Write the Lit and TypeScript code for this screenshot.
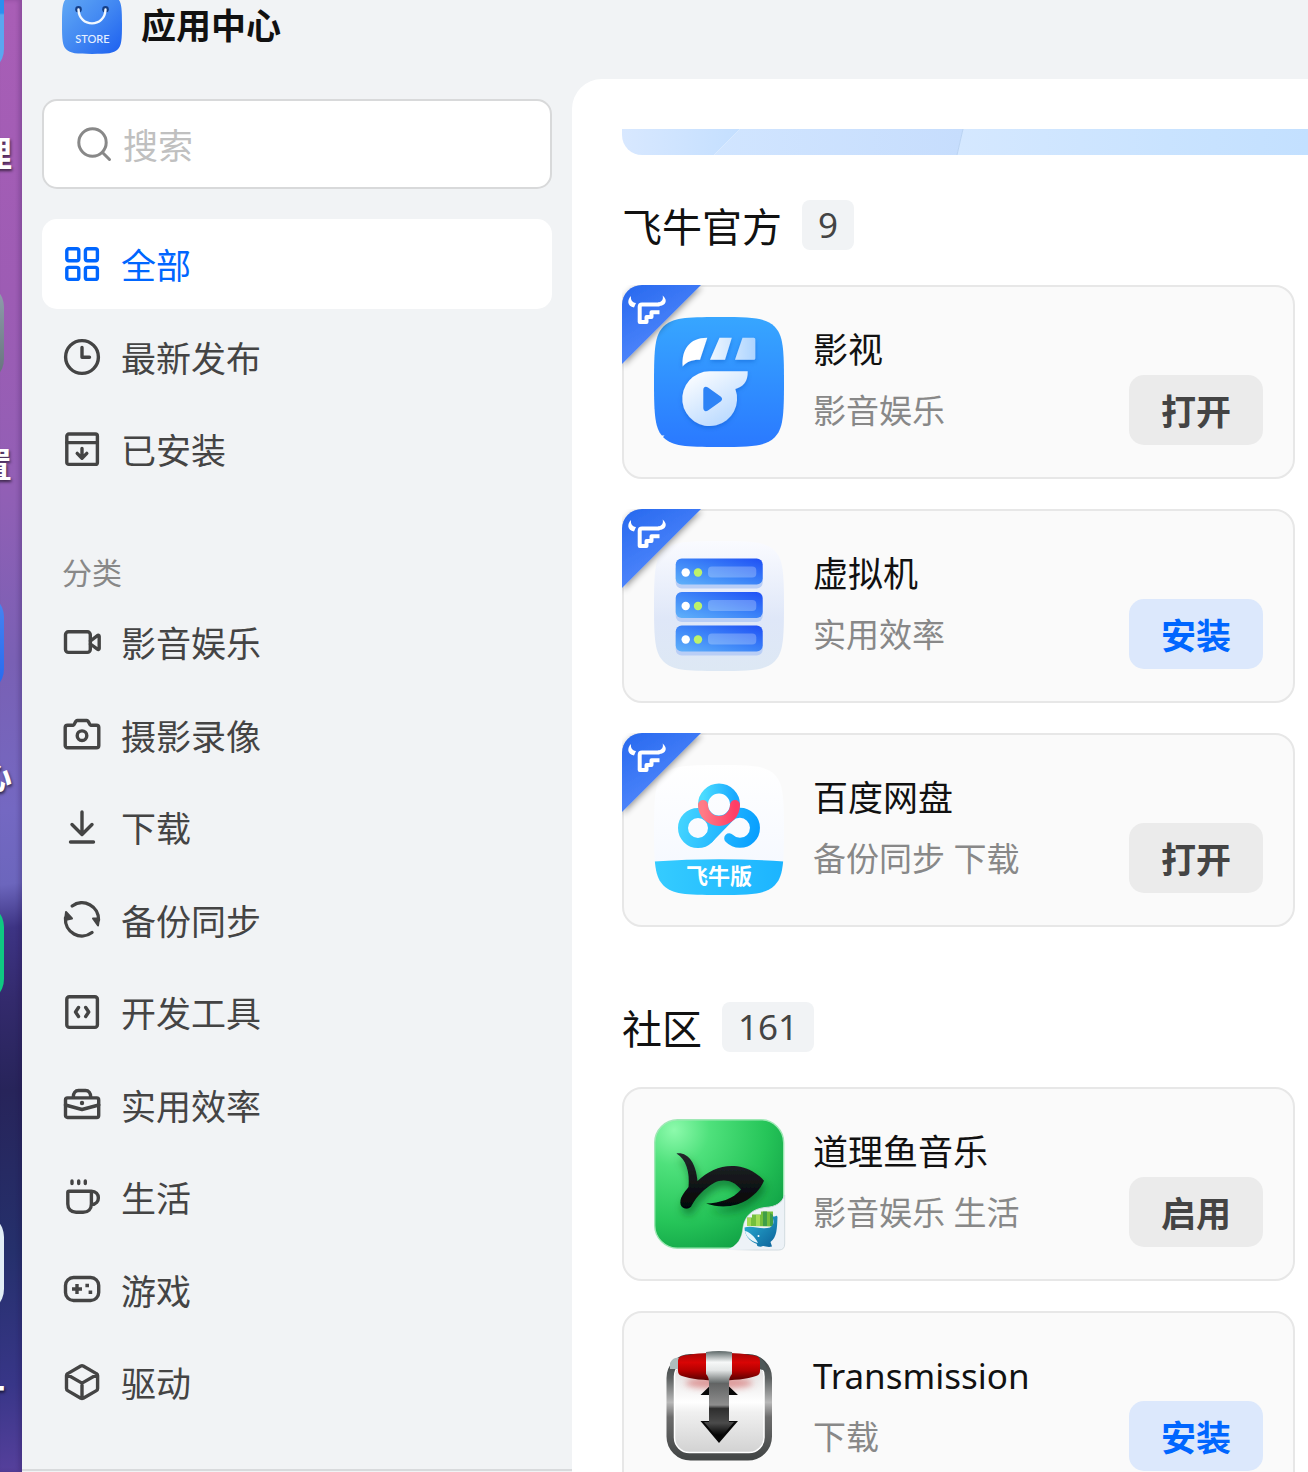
import { LitElement, html, svg, css } from "lit";
import type { SVGTemplateResult, TemplateResult } from "lit";
import { customElement, property, state } from "lit/decorators.js";
import { classMap } from "lit/directives/class-map.js";

const TILE =
  "M0 65C0 31 1 18 9.5 9.5S31 0 65 0 112 1 120.5 9.5 130 31 130 65 129 112 120.5 120.5 99 130 65 130 18 129 9.5 120.5 0 99 0 65Z";

const glyphs: Record<string, SVGTemplateResult> = {
  all: svg`<rect x="4.8" y="4.8" width="12" height="12" rx="2"/><rect x="23.4" y="4.8" width="12" height="12" rx="2"/><rect x="4.8" y="23.4" width="12" height="12" rx="2"/><rect x="23.4" y="23.4" width="12" height="12" rx="2"/>`,
  clock: svg`<circle cx="20" cy="20" r="16.4"/><path d="M20 10.5v9.7h7.5"/>`,
  installed: svg`<rect x="4.8" y="5" width="30.6" height="30.4" rx="2"/><path d="M4.8 13.6h30.6M20 19.5v9M15.2 24.4l4.8 4.8 4.8-4.8"/>`,
  video: svg`<rect x="3.5" y="9.8" width="24.8" height="20.6" rx="3"/><path d="M28.4 19l7-5.4c.8-.6 1.8-.2 1.8.8v12c0 1-1 1.4-1.8.8l-7-5.2"/>`,
  camera: svg`<path d="M5.6 10.2h5.8c1.4 0 1.4-4.7 4-4.7h9.2c2.6 0 2.6 4.7 4 4.7h5.8c1.4 0 2.4 1 2.4 2.4v17.8c0 1.4-1 2.4-2.4 2.4H5.6c-1.4 0-2.4-1-2.4-2.4V12.6c0-1.4 1-2.4 2.4-2.4z"/><circle cx="20" cy="20.7" r="4.8"/>`,
  download: svg`<path d="M20 5v22M10 17.5L20 27.5 30 17.5M8.5 35h23"/>`,
  sync: svg`<path d="M10.2 6A16.5 16.5 0 0 1 36.5 20M3.5 18A16.5 16.5 0 0 0 30 32.5"/><path class="solid" d="M4 12l6 6.5L3 20zM37 18.500h-6l5 7z"/>`,
  code: svg`<rect x="4.8" y="4.8" width="30.6" height="30.6" rx="2.5"/><path d="M16.5 15.5l-3 4.5 3 4.5M23.7 15.5l3 4.5-3 4.5"/>`,
  briefcase: svg`<rect x="3.5" y="12.9" width="33.2" height="19.6" rx="2"/><path d="M11.3 12c0-4 2-6.5 5.2-6.5h7c3.2 0 5.2 2.5 5.2 6.5M3.4 20L20 24.5 36.8 20"/><circle class="dot" cx="20" cy="18" r="2.2"/>`,
  cup: svg`<path d="M7 14.2h22.4v12.8c0 5-3.3 8.3-8.3 8.3h-7c-5 0-8.3-3.3-8.3-8.3V15.4c0-.8.5-1.2 1.2-1.2zM29.4 14.2c9 0 9.6 13 0 13.3M10 4v2.5M16.7 4v2.5M23.3 4v2.5"/>`,
  game: svg`<rect x="3.5" y="7.5" width="33.2" height="23" rx="8"/><path class="butt" d="M10 19h10M15 14v10M23.4 15.5h3.6M26.6 22.3h3.6"/>`,
  cube: svg`<path d="M18.8 4c.8-.4 1.6-.4 2.4 0l13.2 7.6c.8.4 1.2 1 1.2 2v13c0 .9-.4 1.6-1.2 2L21.2 36.2c-.8.4-1.6.4-2.4 0L5.7 28.6c-.8-.4-1.2-1.1-1.2-2v-13c0-1 .4-1.6 1.2-2zM5 12.5l15 8.6 15-8.6M20 21v15.5"/>`,
};

const artwork: Record<string, TemplateResult> = {
  movies: html`<svg viewBox="0 0 130 130" aria-hidden="true">
    <defs>
      <linearGradient id="bg" x2="0" y2="1"><stop stop-color="#37a6ff"/><stop offset="1" stop-color="#2a79ff"/></linearGradient>
      <linearGradient id="a" gradientUnits="userSpaceOnUse" x1="30" y1="0" x2="104" y2="0"><stop offset=".2" stop-color="#fff"/><stop offset="1" stop-color="#a9d2ff"/></linearGradient>
      <linearGradient id="b" x1=".1" x2=".8" y2="1"><stop stop-color="#fff"/><stop offset="1" stop-color="#b3d6ff"/></linearGradient>
      <filter id="s" x="-20%" y="-20%" width="140%" height="150%"><feDropShadow dx="0" dy="2" stdDeviation="2" flood-color="#0b4fc0" flood-opacity=".4"/></filter>
    </defs>
    <path d=${TILE} fill="url(#bg)"/>
    <g filter="url(#s)">
      <path fill="url(#a)" d="M28.7 49.5C27.5 33 35 20.7 53.3 20.7L46 42.7C38 42.5 32 45 28.7 49.5zM65.5 20.7h12.3L71 42.7H56zM88.5 20.7h11.3q1.5 0 1.5 1.5v19q0 1.5-1.5 1.5H81z"/>
      <path fill="url(#b)" d="M55.7 54.3h38C94 65 89 70 81.3 72A27.4 27.4 0 1 1 55.7 54.3z"/>
    </g>
    <path fill="#2d83f6" d="M49.3 73c0-3 2.5-4 4.7-2.4l12.6 9c2 1.4 2 3.4 0 4.8l-12.6 9c-2.2 1.6-4.7.6-4.7-2.4z"/>
    <path fill="#fff" d="M7.5 118.5h3l-2 2z"/>
  </svg>`,
  vm: html`<svg viewBox="0 0 130 130" aria-hidden="true">
    <defs>
      <linearGradient id="bg" x2="0" y2="1"><stop stop-color="#fafbff"/><stop offset=".6" stop-color="#dfe7f8"/><stop offset="1" stop-color="#dde8f4"/></linearGradient>
      <linearGradient id="r" x1="0" y1="1" x2="1" y2="0"><stop stop-color="#60b2fa"/><stop offset=".5" stop-color="#3c83f8"/><stop offset="1" stop-color="#1f4ff5"/></linearGradient>
    </defs>
    <path d=${TILE} fill="url(#bg)"/>
    ${[17.5, 51, 84.5].map(
      (y) => svg`<rect x="21.7" y=${y + 4} width="87" height="26" rx="6" fill="#b9cef6"/>
        <rect x="21.7" y=${y} width="87" height="26" rx="6" fill="url(#r)"/>
        <circle cx="31.7" cy=${y + 14} r="4.2" fill="#fff"/>
        <circle cx="44" cy=${y + 14} r="4.2" fill="#bdf26a"/>
        <rect x="54" y=${y + 8} width="48.3" height="11" rx="4" fill="#fff" opacity=".25"/>`
    )}
  </svg>`,
  netdisk: html`<svg viewBox="0 0 130 130" aria-hidden="true">
    <defs>
      <linearGradient id="bg" x2="0" y2="1"><stop stop-color="#fff"/><stop offset="1" stop-color="#f3f7ff"/></linearGradient>
      <linearGradient id="band" x2="1"><stop stop-color="#35ccff"/><stop offset="1" stop-color="#1cb4ff"/></linearGradient>
      <linearGradient id="c" gradientUnits="userSpaceOnUse" x1="24" y1="50" x2="106" y2="70"><stop stop-color="#46d6ff"/><stop offset="1" stop-color="#069dff"/></linearGradient>
      <linearGradient id="t" x2="1"><stop stop-color="#4adcff"/><stop offset="1" stop-color="#1aa9ff"/></linearGradient>
      <linearGradient id="p" x2="1"><stop stop-color="#ff7b86"/><stop offset="1" stop-color="#ff3d66"/></linearGradient>
      <clipPath id="clip"><path d=${TILE}/></clipPath>
    </defs>
    <path d=${TILE} fill="url(#bg)"/>
    <path clip-path="url(#clip)" fill="url(#band)" d="M0 96.5Q65 92 130 96.5V130H0z"/>
    <g fill="none" stroke-width="10" stroke-linecap="round">
      <g stroke="url(#c)"><circle cx="44" cy="63" r="15"/><path d="M54.6 73.6L75 52.6A15 15 0 1 1 75.2 73.3"/></g>
      <circle cx="65" cy="39.5" r="16" stroke="url(#t)"/>
      <path d="M49 40a16 16 0 0 0 32 0" stroke="url(#p)"/>
    </g>
    <text class="band-text" x="65" y="119" text-anchor="middle">飞牛版</text>
  </svg>`,
  music: html`<svg viewBox="0 0 132 132" class="wide" aria-hidden="true">
    <defs>
      <radialGradient id="bg" cx=".15" cy=".08" r="1.1"><stop stop-color="#8dfaac"/><stop offset=".25" stop-color="#4fe17c"/><stop offset=".65" stop-color="#26c559"/><stop offset="1" stop-color="#0c9a41"/></radialGradient>
      <linearGradient id="fish" x2="0" y2="1"><stop stop-color="#23262b"/><stop offset="1" stop-color="#030507"/></linearGradient>
      <linearGradient id="whale" x2="1" y2="1"><stop stop-color="#2cb5d8"/><stop offset="1" stop-color="#0b5f97"/></linearGradient>
      <linearGradient id="corner" x2="1"><stop offset=".1" stop-color="#d2dbe0" stop-opacity="0"/><stop offset=".5" stop-color="#d2dbe0"/></linearGradient>
      <filter id="s" x="-20%" y="-20%" width="150%" height="170%"><feDropShadow dx="2" dy="6" stdDeviation="4" flood-color="#04551f" flood-opacity=".6"/></filter>
    </defs>
    <rect x=".7" y=".7" width="129" height="128.5" rx="23" fill="url(#bg)" stroke="#9fe8b5" stroke-width="1.4"/>
    <path filter="url(#s)" fill="url(#fish)" d="M22.5 34.5C34 33 42 44 43.500 62C56 50 72 44 89 48.500C98 51 105 56 110 61.700C103 79 80 94 52 84.500C66 84 79 80 87 70.500C80 62 70 59 60 64C50 70 43 77 38 86C36 91 29 91 26.700 86C25 79 30 74 34.500 68C36 53 32 40 22.500 34.500z"/>
    <path fill="#edf2f7" stroke="url(#corner)" d="M130.7 76v49q0 6-6 6H72C84 127 88 119 89 108C91 96 99 90 111 88.500C122 88 128 84 130.700 76z"/>
    <path fill="#74bf3d" d="M93 107V98.500h5v-3h9v-3h12v15z"/>
    <path fill="#3f9e48" d="M109 92.500h4V107h-4zM116 94l3 2v11h-3z"/>
    <path fill="#a4db56" d="M93 99h4v8h-4zM102 96h4v11h-4z"/>
    <path fill="url(#whale)" d="M90.500 108.500C98 106 107 111 116 108.500C120 106 120 103 118.500 97.500C122 98 122.500 95 123.500 98C123 110 123 118 116.500 123L118 127.500C113 129 110 126 108 127.500C105 128 102 127 103 125C95 122 90.500 116 90.500 108.500z"/>
    <path fill="#e5f5fb" d="M91 112C96 113 101 118 104 124C97 122 92 118 91 112z"/>
    <circle cx="104.5" cy="117" r="1" fill="#fff"/>
  </svg>`,
  transmission: html`<svg viewBox="0 0 130 130" aria-hidden="true">
    <defs>
      <linearGradient id="rim" x2="0" y2="1"><stop stop-color="#3d4444"/><stop offset=".2" stop-color="#5c6060"/><stop offset=".45" stop-color="#b8b8b8"/><stop offset=".6" stop-color="#6c6c6c"/><stop offset="1" stop-color="#444747"/></linearGradient>
      <linearGradient id="face" x2="0" y2="1"><stop stop-color="#d9d6d6"/><stop offset=".45" stop-color="#fff"/><stop offset=".55" stop-color="#f0f0f0"/><stop offset="1" stop-color="#cfcfcf"/></linearGradient>
      <linearGradient id="red" x2="0" y2="1"><stop stop-color="#a50606"/><stop offset=".35" stop-color="#d90505"/><stop offset=".65" stop-color="#b40000"/><stop offset="1" stop-color="#500"/></linearGradient>
      <linearGradient id="metal" x2="0" y2="1"><stop stop-color="#5d6868"/><stop offset=".35" stop-color="#f6f8f8"/><stop offset=".6" stop-color="#e3e6e6"/><stop offset="1" stop-color="#656a6a"/></linearGradient>
      <linearGradient id="shaft" gradientUnits="userSpaceOnUse" x1="0" y1="38" x2="0" y2="98"><stop stop-color="#5d5f5f"/><stop offset=".4" stop-color="#8e8e8e"/><stop offset=".46" stop-color="#2e2e2e"/><stop offset=".7" stop-color="#4b4b4b"/><stop offset=".9" stop-color="#050505"/></linearGradient>
      <filter id="blur" x="-20%" y="-50%" width="140%" height="200%"><feGaussianBlur stdDeviation="3"/></filter>
    </defs>
    <rect x="16.5" y="15" width="97.5" height="98.5" rx="20" fill="url(#face)" stroke="url(#rim)" stroke-width="8"/>
    <rect x="20.5" y="18.5" width="89.5" height="91" rx="15" fill="none" stroke="#fff" stroke-width="1.5"/>
    <ellipse cx="65" cy="40" rx="34" ry="6" fill="#c44" opacity=".5" filter="url(#blur)"/>
    <path fill="#aebdbd" d="M16 20q3-6 9-5v11h-9z"/>
    <path fill="#4d5858" d="M105 14q7 4 8 14l-8-2z"/>
    <path fill="url(#red)" d="M28 13C45 8.500 85 8.500 102 13q4 1 4 5v10q0 4-4 5C85 39 45 39 28 33q-4-1-4-5V18q0-4 4-5z"/>
    <path fill="#080808" d="M65 34L84 52H75V78H84L65 100 46.500 78H55V52H46.500z"/>
    <path fill="url(#shaft)" d="M55 38h20v41h5L65 96.500 50 79h5z"/>
    <path fill="url(#metal)" d="M52 9q13-2 26 0v22q-3 3-3 9H55q0-6-3-9z"/>
  </svg>`,
};

interface AppInfo {
  name: string;
  tags: string;
  action: string;
  art: string;
  primary?: boolean;
  official?: boolean;
}

interface Section {
  title: string;
  count: number;
  apps: AppInfo[];
}

const sections: Section[] = [
  {
    title: "飞牛官方",
    count: 9,
    apps: [
      { name: "影视", tags: "影音娱乐", action: "打开", art: "movies", official: true },
      { name: "虚拟机", tags: "实用效率", action: "安装", art: "vm", primary: true, official: true },
      { name: "百度网盘", tags: "备份同步 下载", action: "打开", art: "netdisk", official: true },
    ],
  },
  {
    title: "社区",
    count: 161,
    apps: [
      { name: "道理鱼音乐", tags: "影音娱乐 生活", action: "启用", art: "music" },
      { name: "Transmission", tags: "下载", action: "安装", art: "transmission", primary: true },
    ],
  },
];

const mainNav = [
  ["all", "全部"],
  ["clock", "最新发布"],
  ["installed", "已安装"],
];

const categories = [
  ["video", "影音娱乐"],
  ["camera", "摄影录像"],
  ["download", "下载"],
  ["sync", "备份同步"],
  ["code", "开发工具"],
  ["briefcase", "实用效率"],
  ["cup", "生活"],
  ["game", "游戏"],
  ["cube", "驱动"],
];

@customElement("app-art")
class AppArt extends LitElement {
  @property() name = "";

  static styles = css`
    :host {
      display: block;
      width: 130px;
      height: 130px;
      flex: none;
    }
    svg {
      display: block;
      width: 130px;
      height: 130px;
    }
    .wide {
      width: 132px;
      height: 132px;
    }
    .band-text {
      font: 700 22px "Noto Sans CJK SC", sans-serif;
      fill: #fff;
    }
  `;

  render() {
    return artwork[this.name];
  }
}

@customElement("app-card")
class AppCard extends LitElement {
  @property({ attribute: false }) app!: AppInfo;

  static styles = css`
    :host {
      display: block;
    }
    .card {
      position: relative;
      display: flex;
      gap: 29px;
      padding: 30px;
      border: 2px solid #e7e7e7;
      border-radius: 20px;
      background: #fafafa;
    }
    .ribbon {
      position: absolute;
      left: -2px;
      top: -2px;
      width: 90px;
      height: 90px;
    }
    .body {
      flex: 1;
      min-width: 0;
      display: flex;
      flex-direction: column;
      justify-content: space-between;
      padding-bottom: 2px;
    }
    .name {
      margin: 0;
      padding-top: 8px;
      font-size: 35px;
      line-height: 50px;
      font-weight: 400;
      color: #111;
    }
    .row {
      display: flex;
      align-items: center;
      justify-content: space-between;
      gap: 20px;
    }
    .tags {
      padding-top: 2px;
      font-size: 33px;
      line-height: 50px;
      color: #888;
    }
    .action {
      height: 70px;
      padding: 4px 32px 0;
      border: 0;
      border-radius: 15px;
      background: #ebebeb;
      color: #444;
      font: inherit;
      font-size: 35px;
      font-weight: 700;
      line-height: 66px;
      cursor: pointer;
    }
    .primary {
      background: #dce8fc;
      color: #0066ff;
    }
  `;

  render() {
    const { name, tags, action, art, primary, official } = this.app;
    return html`<article class="card">
      <app-art .name=${art}></app-art>
      ${official
        ? html`<svg class="ribbon" viewBox="0 0 90 90" aria-hidden="true">
            <defs>
              <linearGradient id="g" x2=".6" y2="1"><stop stop-color="#2668ee"/><stop offset="1" stop-color="#588dff"/></linearGradient>
              <filter id="s" x="-10%" y="-10%" width="130%" height="130%"><feDropShadow dx="1" dy="2" stdDeviation="3" flood-opacity=".4"/></filter>
            </defs>
            <path filter="url(#s)" fill="url(#g)" d="M20 0H79L0 79V20A20 20 0 0 1 20 0z"/>
            <path fill="#fff" d="M9 11C5 14.500 5 21.500 12 22.500L14 18C10 17.500 8.600 15 9 11zM40.700 10.500C41.500 14.500 40 17 36 17.500L37 21C43.500 20.800 46.500 15.500 40.700 10.500z"/>
            <path fill="none" stroke="#fff" stroke-width="4" stroke-linejoin="round" d="M37.500 19.500H20q-2.300 0-2.300 2.300V37H24.500V32H29.500V27.300H37.500"/>
          </svg>`
        : null}
      <div class="body">
        <h3 class="name">${name}</h3>
        <div class="row">
          <span class="tags">${tags}</span>
          <button class=${classMap({ action: true, primary: !!primary })} type="button">${action}</button>
        </div>
      </div>
    </article>`;
  }
}

@customElement("app-root")
class AppRoot extends LitElement {
  @state() private current = "all";

  static styles = css`
    :host {
      display: block;
      height: 100vh;
      overflow: hidden;
      font-family: "Noto Sans", "Noto Sans CJK SC", sans-serif;
      color: #111;
    }
    .screen {
      display: grid;
      grid-template-columns: 22px minmax(0, 1fr);
      height: 100%;
    }
    .desktop {
      position: relative;
      overflow: hidden;
      background: linear-gradient(
        172deg,
        #a95eb6 0%,
        #9d5cb4 20%,
        #925fb5 33%,
        #7960b4 45%,
        #7468c2 55%,
        #6c66bd 60%,
        #3d3484 63%,
        #332a6c 68%,
        #27245a 74%,
        #25306c 85%,
        #383688 94%,
        #56409c 100%
      );
      box-shadow: inset -3px 0 4px rgba(30, 10, 60, 0.2);
    }
    .shortcut {
      position: absolute;
      right: 18px;
      width: 100px;
      height: 100px;
      border-radius: 24px;
    }
    .caption {
      position: absolute;
      right: 10px;
      font-size: 35px;
      line-height: 40px;
      font-weight: 700;
      color: #fff;
      text-shadow: 1px 2px 3px rgba(0, 0, 0, 0.6);
    }
    .s1 { top: -27px; background: linear-gradient(#2b8ff0 40%, #5aa6f0 42%); }
    .s2 { top: 283px; background: linear-gradient(#92a0b0, #64707a); }
    .s3 { top: 593px; background: linear-gradient(#4a86f0, #2468f0); }
    .s4 { top: 903px; background: #0fc882; }
    .s5 { top: 1213px; background: #e2eef6; }
    .c1 { top: 134px; }
    .c2 { top: 445px; }
    .c3 { top: 756px; }
    .c5 { top: 1369px; right: 17px; }
    .window {
      display: grid;
      grid-template-rows: 109px minmax(0, 1fr);
      grid-template-columns: 550px minmax(0, 1fr);
      margin-top: -30px;
      border-top-left-radius: 31px;
      background: #f1f3f5;
      min-height: 0;
    }
    .header {
      grid-column: 1 / -1;
      display: flex;
      align-items: center;
      gap: 19px;
      padding: 0 40px 1px;
    }
    .store {
      width: 60px;
      height: 60px;
    }
    .store-text {
      font: 500 11px Lato, sans-serif;
      fill: #e6f0ff;
    }
    .title {
      margin: 0;
      padding-top: 4px;
      font-size: 35px;
      line-height: 52px;
      font-weight: 700;
    }
    .sidebar {
      display: flex;
      flex-direction: column;
      min-height: 0;
    }
    .side-body {
      flex: 1;
      min-height: 0;
      overflow: hidden;
      padding: 20px 20px 0;
    }
    .search {
      display: flex;
      align-items: center;
      gap: 9px;
      height: 86px;
      padding: 0 30px;
      margin-bottom: 30px;
      border: 2px solid #d8d9da;
      border-radius: 15px;
      background: #fff;
    }
    .search-icon {
      width: 40px;
      height: 40px;
      flex: none;
      fill: none;
      stroke: #888;
      stroke-width: 3;
      stroke-linecap: round;
    }
    .field {
      flex: 1;
      min-width: 0;
      height: 60px;
      padding: 3px 0 0;
      border: 0;
      outline: 0;
      background: none;
      font: inherit;
      font-size: 35px;
      color: #111;
    }
    .field::placeholder {
      color: #c0c0c0;
      opacity: 1;
    }
    .nav {
      display: flex;
      flex-direction: column;
      gap: 2px;
    }
    .item {
      display: flex;
      align-items: center;
      gap: 19px;
      height: 90px;
      padding: 0 20px;
      border: 0;
      border-radius: 15px;
      background: none;
      color: #444;
      font: inherit;
      font-size: 35px;
      line-height: 52px;
      text-align: left;
      cursor: pointer;
    }
    .item:nth-child(even) {
      margin-top: 1px;
    }
    .label {
      padding-top: 4px;
    }
    .active {
      background: #fff;
      color: #0066ff;
    }
    .glyph {
      width: 40px;
      height: 40px;
      flex: none;
      fill: none;
      stroke: currentColor;
      stroke-width: 3.4;
      stroke-linecap: round;
      stroke-linejoin: round;
    }
    .solid {
      fill: currentColor;
      stroke-width: 2;
    }
    .dot {
      fill: currentColor;
      stroke: none;
    }
    .butt {
      stroke-linecap: butt;
    }
    .group {
      margin: 0;
      padding: 55px 20px 1px;
      font-size: 30px;
      line-height: 47px;
      font-weight: 400;
      color: #888;
    }
    .footer {
      height: 1px;
      border-top: 2px solid #d8dadc;
    }
    .main {
      min-height: 0;
      overflow: hidden;
      padding: 50px 0 0 50px;
      border-top-left-radius: 30px;
      background: #fff;
    }
    .banner {
      display: block;
      width: 100%;
      height: 26px;
      border-bottom-left-radius: 20px;
    }
    .section {
      padding: 45px 13px 30px 0;
    }
    .heading {
      display: flex;
      align-items: center;
      gap: 20px;
      height: 50px;
      margin-bottom: 35px;
    }
    .heading-text {
      margin: 0;
      padding-top: 4px;
      font-size: 40px;
      line-height: 50px;
      font-weight: 400;
    }
    .count {
      padding: 0 16px;
      border-radius: 8px;
      background: #f1f3f5;
      color: #444;
      font-size: 35px;
      line-height: 50px;
    }
    .cards {
      display: grid;
      gap: 30px;
    }
  `;

  private navItem([id, label]: string[]) {
    return html`<button
      type="button"
      class=${classMap({ item: true, active: this.current === id })}
      @click=${() => (this.current = id)}
    >
      <svg class="glyph" viewBox="0 0 40 40" aria-hidden="true">${glyphs[id]}</svg>
      <span class="label">${label}</span>
    </button>`;
  }

  render() {
    return html`<div class="screen">
      <div class="desktop">
        <div class="shortcut s1"></div>
        <div class="caption c1">理</div>
        <div class="shortcut s2"></div>
        <div class="caption c2">置</div>
        <div class="shortcut s3"></div>
        <div class="caption c3">心</div>
        <div class="shortcut s4"></div>
        <div class="shortcut s5"></div>
        <div class="caption c5">一</div>
      </div>
      <div class="window">
        <header class="header">
          <svg class="store" viewBox="0 0 130 130" aria-hidden="true">
            <defs>
              <linearGradient id="store" x2="1" y2="1"><stop stop-color="#64abf5"/><stop offset=".5" stop-color="#4389f2"/><stop offset="1" stop-color="#1c5ff0"/></linearGradient>
            </defs>
            <path fill="url(#store)" d=${TILE}/>
            <svg viewBox="0 0 60 60" width="130" height="130">
              <circle cx="16.5" cy="15.3" r="3.3" fill="#153f86"/>
              <circle cx="43.5" cy="15.3" r="3.3" fill="#153f86"/>
              <path fill="none" stroke="#f2f8ff" stroke-width="2.4" stroke-linecap="round" d="M16.5 15.5C17 34 43 34 43.5 15.5"/>
              <text class="store-text" x="30.5" y="49" text-anchor="middle">STORE</text>
            </svg>
          </svg>
          <h1 class="title">应用中心</h1>
        </header>
        <aside class="sidebar">
          <div class="side-body">
            <label class="search">
              <svg class="search-icon" viewBox="0 0 40 40" aria-hidden="true"><circle cx="18.5" cy="18.5" r="13.7"/><path d="M28.5 28.5l7 7"/></svg>
              <input class="field" type="search" placeholder="搜索" aria-label="搜索" />
            </label>
            <nav class="nav">${mainNav.map((n) => this.navItem(n))}</nav>
            <h2 class="group">分类</h2>
            <nav class="nav">${categories.map((n) => this.navItem(n))}</nav>
          </div>
          <div class="footer"></div>
        </aside>
        <main class="main">
          <svg class="banner" viewBox="0 0 686 26" preserveAspectRatio="xMinYMin slice" aria-hidden="true">
            <defs>
              <linearGradient id="b1" x2="1"><stop stop-color="#d8e8ff"/><stop offset="1" stop-color="#c4dfff"/></linearGradient>
              <linearGradient id="b2" x2="1"><stop stop-color="#d1e5ff"/><stop offset="1" stop-color="#c6ddfd"/></linearGradient>
              <linearGradient id="b3" x2="1"><stop stop-color="#d5e8ff"/><stop offset=".6" stop-color="#c9e3ff"/><stop offset="1" stop-color="#c3e0ff"/></linearGradient>
            </defs>
            <path fill="url(#b1)" d="M0 0h118L92 26H0z"/>
            <path fill="url(#b2)" d="M118 0h223l-6 26H92z"/>
            <path fill="url(#b3)" d="M341 0h345v26H335z"/>
            <path stroke="#b9d2f3" d="M341 0l-6 26"/>
          </svg>
          ${sections.map(
            (s) => html`<section class="section">
              <div class="heading">
                <h2 class="heading-text">${s.title}</h2>
                <span class="count">${s.count}</span>
              </div>
              <div class="cards">${s.apps.map((a) => html`<app-card .app=${a}></app-card>`)}</div>
            </section>`
          )}
        </main>
      </div>
    </div>`;
  }
}
